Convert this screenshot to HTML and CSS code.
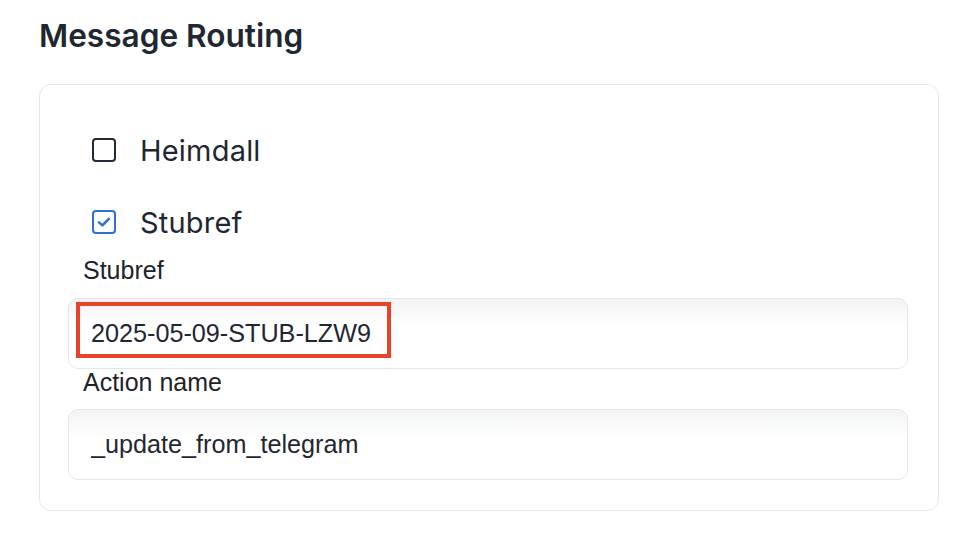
FILE: index.html
```html
<!DOCTYPE html>
<html lang="en">
<head>
<meta charset="UTF-8">
<meta name="viewport" content="width=device-width, initial-scale=1.0">
<title>Message Routing</title>
<link rel="stylesheet" href="styles.css">
</head>
<body>
  <main class="page">
    <h2 class="section-title">Message Routing</h2>
    <div class="routing-card">
      <label class="check-row">
        <span class="check-box"></span>
        <span class="check-label">Heimdall</span>
      </label>
      <label class="check-row">
        <span class="check-box checked">
          <svg width="18" height="18" viewBox="0 0 18 18"><path d="M4 9.4 L7.4 12.4 L13.8 5.8" fill="none" stroke="#2f6fd6" stroke-width="2.6" stroke-linecap="round" stroke-linejoin="round"/></svg>
        </span>
        <span class="check-label">Stubref</span>
      </label>

      <div class="field-label">Stubref</div>
      <div class="field">
        <input type="text" class="field-input" value="2025-05-09-STUB-LZW9">
        <div class="highlight"></div>
      </div>

      <div class="field-label">Action name</div>
      <div class="field">
        <input type="text" class="field-input" value="_update_from_telegram">
      </div>
    </div>
  </main>
</body>
</html>
```

FILE: styles.css
```css
body {
  margin: 0;
  padding: 0;
  background-color: #ffffff;
  font-family: Inter, "Liberation Sans", sans-serif;
  color: #1f2733;
}

.page {
  padding: 0 32px 0 39px;
}

.section-title {
  margin: 0;
  padding-top: 16px;
  height: 84px;
  box-sizing: border-box;
  font-size: 31.6px;
  font-weight: 600;
  line-height: 40px;
  color: #1f2733;
}

.routing-card {
  width: 900px;
  box-sizing: border-box;
  border: 1px solid #e6e8ec;
  border-radius: 12px;
  padding: 41px 30px 30px 28px;
  display: flex;
  flex-direction: column;
}

.check-row {
  display: flex;
  align-items: center;
  height: 48px;
  padding-left: 24px;
  cursor: pointer;
}

.check-row + .check-row {
  margin-top: 24px;
}

.check-box {
  width: 20px;
  height: 20px;
  border: 2.5px solid #232b36;
  border-radius: 4px;
  display: flex;
  align-items: center;
  justify-content: center;
}

.check-box.checked {
  border-color: #2f6fd6;
}

.check-label {
  margin-left: 24px;
  font-size: 29px;
  font-weight: 400;
  color: #1f2733;
  letter-spacing: 0.2px;
}

.field-label {
  font-family: "Liberation Sans", Arial, sans-serif;
  font-size: 25px;
  line-height: 26px;
  color: #1f2328;
  padding-left: 15px;
  margin-top: 11px;
}

.field-label + .field {
  margin-top: 15px;
}

.field + .field-label {
  margin-top: 0;
}

.field + .field-label + .field {
  margin-top: 14px;
}

.field {
  position: relative;
}

.field-input {
  display: block;
  width: 100%;
  height: 71px;
  box-sizing: border-box;
  border: 1px solid #e3e6eb;
  border-radius: 10px;
  padding: 0 22px;
  font-family: "Liberation Sans", Arial, sans-serif;
  font-size: 25.2px;
  color: #1f2733;
  background: linear-gradient(#f2f3f5, #ffffff 40%);
  outline: none;
}

/* annotation box drawn over the first value */
.highlight {
  position: absolute;
  left: 8px;
  top: 4px;
  width: 315px;
  height: 56px;
  box-sizing: border-box;
  border: 4px solid #e8422b;
  pointer-events: none;
}
```
